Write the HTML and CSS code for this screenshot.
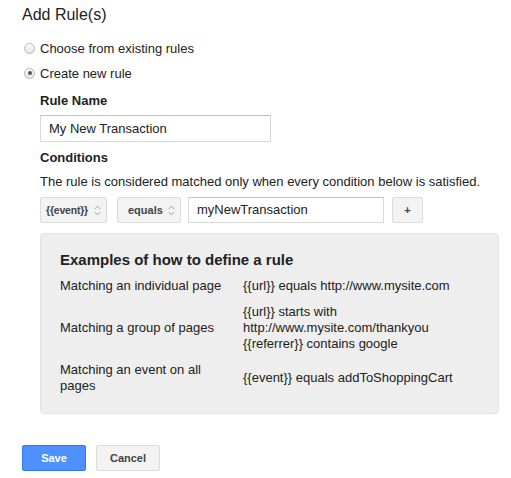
FILE: index.html
```html
<!DOCTYPE html>
<html>
<head>
<meta charset="utf-8">
<link rel="stylesheet" href="styles.css">
</head>
<body>
<div class="page">
  <h1 class="title">Add Rule(s)</h1>
  <div class="radio-row"><span class="radio"></span><span>Choose from existing rules</span></div>
  <div class="radio-row"><span class="radio checked"></span><span>Create new rule</span></div>
  <div class="section">
    <div class="label">Rule Name</div>
    <div class="text-input name-input">My New Transaction</div>
    <div class="label cond-label">Conditions</div>
    <div class="desc">The rule is considered matched only when every condition below is satisfied.</div>
    <div class="cond-row">
      <div class="select sel-event">{{event}}<span class="arrows"><svg width="7" height="11" viewBox="0 0 7 11"><path d="M0.8 4 L3.5 1.2 L6.2 4 M0.8 7 L3.5 9.8 L6.2 7" fill="none" stroke="#999" stroke-width="0.9"/></svg></span></div>
      <div class="select sel-equals">equals<span class="arrows"><svg width="7" height="11" viewBox="0 0 7 11"><path d="M0.8 4 L3.5 1.2 L6.2 4 M0.8 7 L3.5 9.8 L6.2 7" fill="none" stroke="#999" stroke-width="0.9"/></svg></span></div>
      <div class="text-input value-input">myNewTransaction</div>
      <div class="btn plus">+</div>
    </div>
    <div class="examples">
      <div class="ex-title">Examples of how to define a rule</div>
      <div class="ex-grid">
        <div class="ex-label">Matching an individual page</div>
        <div class="ex-value">{{url}} equals http://www.mysite.com</div>
        <div class="ex-label">Matching a group of pages</div>
        <div class="ex-value">{{url}} starts with<br>http://www.mysite.com/thankyou<br>{{referrer}} contains google</div>
        <div class="ex-label">Matching an event on all<br>pages</div>
        <div class="ex-value">{{event}} equals addToShoppingCart</div>
      </div>
    </div>
  </div>
  <div class="actions">
    <div class="btn save">Save</div>
    <div class="btn cancel">Cancel</div>
  </div>
</div>
</body>
</html>
```
FILE: styles.css
```css
html, body {
  margin: 0;
  padding: 0;
  background: #fff;
}
body {
  font-family: "Liberation Sans", Arial, sans-serif;
  font-size: 13px;
  color: #222;
}
.page {
  padding: 5px 0 0 22px;
}
.title {
  font-size: 16px;
  font-weight: normal;
  margin: 0;
  line-height: 20px;
  color: #222;
}
.radio-row {
  display: flex;
  align-items: center;
  height: 16px;
  margin-left: 2px;
}
.title + .radio-row {
  margin-top: 15px;
}
.radio-row + .radio-row {
  margin-top: 9px;
}
.radio {
  width: 9px;
  height: 9px;
  border-radius: 50%;
  border: 1px solid #b8b8b8;
  background: linear-gradient(#fafafa, #e4e4e4);
  margin-right: 5px;
  position: relative;
  flex: none;
}
.radio.checked::after {
  content: "";
  position: absolute;
  left: 2.5px;
  top: 2.5px;
  width: 4px;
  height: 4px;
  border-radius: 50%;
  background: #555;
}
.section {
  margin-left: 18px;
}
.label {
  font-weight: bold;
  margin-top: 12px;
  line-height: 16px;
}
.text-input {
  box-sizing: border-box;
  border: 1px solid #d9d9d9;
  border-top-color: #c0c0c0;
  height: 27px;
  line-height: 25px;
  padding-left: 8px;
  background: #fff;
}
.name-input {
  width: 231px;
  margin-top: 6px;
}
.cond-label {
  margin-top: 8px;
}
.desc {
  margin-top: 8px;
  line-height: 16px;
}
.cond-row {
  display: flex;
  margin-top: 7px;
  height: 26px;
}
.select {
  box-sizing: border-box;
  height: 26px;
  border: 1px solid #dcdcdc;
  border-radius: 2px;
  background: #f3f3f3;
  font-size: 11px;
  font-weight: bold;
  color: #444;
  display: flex;
  align-items: center;
  padding-left: 7px;
  position: relative;
}
.arrows {
  position: absolute;
  right: 5px;
  top: 7px;
  line-height: 0;
}
.sel-event {
  width: 67px;
  padding-left: 5px;
  font-size: 10.5px;
  letter-spacing: -0.2px;
}
.sel-equals {
  width: 64px;
  margin-left: 10px;
  padding-left: 10px;
}
.value-input {
  width: 196px;
  margin-left: 7px;
  height: 26px;
  line-height: 24px;
  font-size: 13px;
}
.btn {
  box-sizing: border-box;
  border-radius: 2px;
  display: flex;
  align-items: center;
  justify-content: center;
  font-weight: bold;
  font-size: 11px;
}
.plus {
  width: 31px;
  height: 26px;
  margin-left: 8px;
  border: 1px solid #dcdcdc;
  background: #f3f3f3;
  color: #444;
}
.examples {
  box-sizing: border-box;
  width: 459px;
  margin-top: 10px;
  background: #eeeeee;
  border: 1px solid #e3e3e3;
  border-radius: 4px;
  padding: 16px 19px 19px 19px;
}
.ex-title {
  font-size: 15px;
  font-weight: bold;
  line-height: 19px;
  color: #222;
}
.ex-grid {
  display: grid;
  grid-template-columns: 183px 1fr;
  row-gap: 10px;
  margin-top: 9px;
  align-items: center;
  line-height: 16px;
  color: #222;
}
.actions {
  display: flex;
  gap: 10px;
  margin-top: 31px;
}
.save {
  width: 64px;
  height: 26px;
  background: #4d90fe;
  border: 1px solid #3079ed;
  color: #fff;
}
.cancel {
  width: 64px;
  height: 26px;
  background: #f3f3f3;
  border: 1px solid #dcdcdc;
  color: #444;
}
```
